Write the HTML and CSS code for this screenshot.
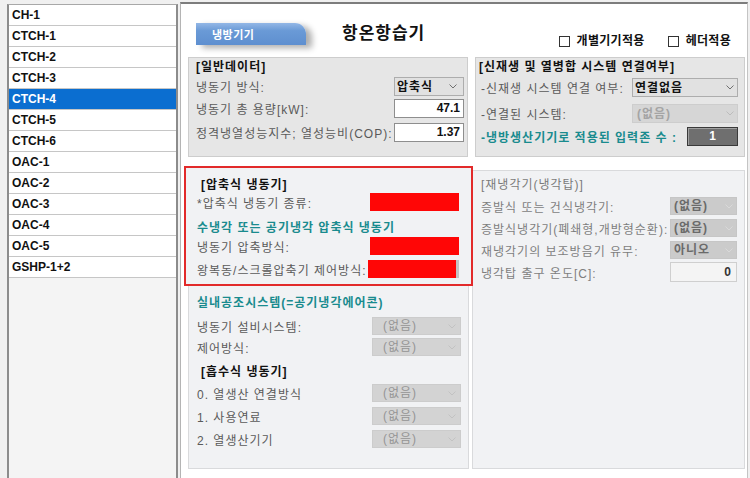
FILE: index.html
```html
<!DOCTYPE html>
<html lang="ko">
<head>
<meta charset="utf-8">
<title>항온항습기</title>
<link rel="stylesheet" href="styles.css">
</head>
<body>
<div class="app">
  <aside class="list">
    <div class="item">CH-1</div>
    <div class="item">CTCH-1</div>
    <div class="item">CTCH-2</div>
    <div class="item">CTCH-3</div>
    <div class="item selected">CTCH-4</div>
    <div class="item">CTCH-5</div>
    <div class="item">CTCH-6</div>
    <div class="item">OAC-1</div>
    <div class="item">OAC-2</div>
    <div class="item">OAC-3</div>
    <div class="item">OAC-4</div>
    <div class="item">OAC-5</div>
    <div class="item">GSHP-1+2</div>
  </aside>

  <main class="pane">
    <header class="head">
      <div class="tab">냉방기기</div>
      <h1 class="title">항온항습기</h1>
      <div class="checks">
        <label class="check"><span class="box"></span>개별기기적용</label>
        <label class="check"><span class="box"></span>헤더적용</label>
      </div>
    </header>

    <div class="top-row">
      <section class="panel p-general">
        <div class="ph">[일반데이터]</div>
        <div class="row r1">
          <span class="lbl">냉동기 방식:</span>
          <div class="combo w70 wide-pad">압축식<svg class="chev" width="8" height="5" viewBox="0 0 8 5"><path d="M0.5 0.5L4 4L7.5 0.5" fill="none" stroke="currentColor"/></svg></div>
        </div>
        <div class="row r2">
          <span class="lbl">냉동기 총 용량[kW]:</span>
          <div class="num w70">47.1</div>
        </div>
        <div class="row r3">
          <span class="lbl">정격냉열성능지수; 열성능비(COP):</span>
          <div class="num w70">1.37</div>
        </div>
      </section>

      <section class="panel p-renew">
        <div class="ph">[신재생 및 열병합 시스템 연결여부]</div>
        <div class="row r1">
          <span class="lbl">-신재생 시스템 연결 여부:</span>
          <div class="combo w106">연결없음<svg class="chev" width="8" height="5" viewBox="0 0 8 5"><path d="M0.5 0.5L4 4L7.5 0.5" fill="none" stroke="currentColor"/></svg></div>
        </div>
        <div class="row r2">
          <span class="lbl">-연결된 시스템:</span>
          <div class="combo w106 dis-light">(없음)<svg class="chev" width="8" height="5" viewBox="0 0 8 5"><path d="M0.5 0.5L4 4L7.5 0.5" fill="none" stroke="currentColor"/></svg></div>
        </div>
        <div class="row r3">
          <span class="lbl teal">-냉방생산기기로 적용된 입력존 수 :</span>
          <div class="zone">1</div>
        </div>
      </section>
    </div>

    <div class="low-row">
      <section class="panel2 p-left">
        <div class="highlight">
          <div class="sh">[압축식 냉동기]</div>
          <div class="row hr1">
            <span class="lbl">*압축식 냉동기 종류:</span>
            <div class="redbox"></div>
          </div>
          <div class="teal-h t1">수냉각 또는 공기냉각 압축식 냉동기</div>
          <div class="row hr2">
            <span class="lbl">냉동기 압축방식:</span>
            <div class="redbox"></div>
          </div>
          <div class="row hr3">
            <span class="lbl">왕복동/스크롤압축기 제어방식:</span>
            <div class="redbox edge"></div>
          </div>
        </div>

        <div class="sub">
          <div class="teal-h t2">실내공조시스템(=공기냉각에어콘)</div>
          <div class="row lr1">
            <span class="lbl">냉동기 설비시스템:</span>
            <div class="combo w89 dis">(없음)<svg class="chev" width="8" height="5" viewBox="0 0 8 5"><path d="M0.5 0.5L4 4L7.5 0.5" fill="none" stroke="currentColor"/></svg></div>
          </div>
          <div class="row lr2">
            <span class="lbl">제어방식:</span>
            <div class="combo w89 dis">(없음)<svg class="chev" width="8" height="5" viewBox="0 0 8 5"><path d="M0.5 0.5L4 4L7.5 0.5" fill="none" stroke="currentColor"/></svg></div>
          </div>
          <div class="sh sh2">[흡수식 냉동기]</div>
          <div class="row lr3">
            <span class="lbl">0. 열생산 연결방식</span>
            <div class="combo w89 dis">(없음)<svg class="chev" width="8" height="5" viewBox="0 0 8 5"><path d="M0.5 0.5L4 4L7.5 0.5" fill="none" stroke="currentColor"/></svg></div>
          </div>
          <div class="row lr4">
            <span class="lbl">1. 사용연료</span>
            <div class="combo w89 dis">(없음)<svg class="chev" width="8" height="5" viewBox="0 0 8 5"><path d="M0.5 0.5L4 4L7.5 0.5" fill="none" stroke="currentColor"/></svg></div>
          </div>
          <div class="row lr4">
            <span class="lbl">2. 열생산기기</span>
            <div class="combo w89 dis">(없음)<svg class="chev" width="8" height="5" viewBox="0 0 8 5"><path d="M0.5 0.5L4 4L7.5 0.5" fill="none" stroke="currentColor"/></svg></div>
          </div>
        </div>
      </section>

      <section class="panel2 p-right">
        <div class="gh">[재냉각기(냉각탑)]</div>
        <div class="row rr">
          <span class="lbl">증발식 또는 건식냉각기:</span>
          <div class="combo w67 dis-dark">(없음)<svg class="chev" width="8" height="5" viewBox="0 0 8 5"><path d="M0.5 0.5L4 4L7.5 0.5" fill="none" stroke="currentColor"/></svg></div>
        </div>
        <div class="row rr">
          <span class="lbl">증발식냉각기(폐쇄형,개방형순환):</span>
          <div class="combo w67 dis-dark">(없음)<svg class="chev" width="8" height="5" viewBox="0 0 8 5"><path d="M0.5 0.5L4 4L7.5 0.5" fill="none" stroke="currentColor"/></svg></div>
        </div>
        <div class="row rr">
          <span class="lbl">재냉각기의 보조방음기 유무:</span>
          <div class="combo w67 dis-dark">아니오<svg class="chev" width="8" height="5" viewBox="0 0 8 5"><path d="M0.5 0.5L4 4L7.5 0.5" fill="none" stroke="currentColor"/></svg></div>
        </div>
        <div class="row rr ri">
          <span class="lbl">냉각탑 출구 온도[C]:</span>
          <div class="num w67 numdis">0</div>
        </div>
      </section>
    </div>
  </main>
</div>
</body>
</html>
```

FILE: styles.css
```css
* { box-sizing: border-box; }
html, body { margin: 0; padding: 0; }
body {
  width: 750px;
  height: 478px;
  overflow: hidden;
  background: #f0f0f0;
  font-family: "Liberation Sans", "Noto Sans CJK KR", sans-serif;
  font-size: 12px;
  color: #000;
}
.app {
  display: flex;
  height: 478px;
  padding-top: 2px;
}

/* left list */
.list {
  margin-left: 7px;
  margin-top: 2px;
  width: 171px;
  border-left: 2px solid #8c8c8c;
  border-right: 2px solid #8c8c8c;
  border-top: 1px solid #a8a8a8;
  background: #f4f4f4;
}
.item {
  height: 21px;
  line-height: 20px;
  border-bottom: 1px solid #c6c6c6;
  background: #fff;
  padding-left: 3px;
  font-weight: bold;
  font-size: 12px;
  color: #111;
}
.item.selected { background: #0b6ed0; color: #fff; }

/* right pane */
.pane {
  margin-left: 2px;
  width: 568px;
  height: 476px;
  background: #fff;
  border-left: 1px solid #b4b4b4;
  border-right: 1px solid #c4c4c4;
  border-top: 2px solid #7d7d7d;
  padding: 0 2px 0 7px;
  letter-spacing: 1px;
}
.head {
  display: flex;
  align-items: flex-start;
  height: 53px;
}
.tab {
  margin-top: 19px;
  margin-left: 8px;
  width: 110px;
  height: 22px;
  padding: 3px 0 0 16px;
  line-height: 19px;
  font-size: 11px;
  font-weight: bold;
  color: #fff;
  letter-spacing: 0.5px;
  background: linear-gradient(#93b7e6, #6a9ad6 35%, #5e8fd0);
  border-top-right-radius: 11px;
  box-shadow: 6px 3px 6px rgba(0, 0, 0, 0.32);
}
.title {
  margin: 20px 0 0 36px;
  font-size: 17px;
  line-height: 20px;
  font-weight: bold;
  color: #111;
}
.checks {
  margin: 30px 14px 0 auto;
  display: flex;
  gap: 23px;
}
.check {
  display: flex;
  align-items: center;
  gap: 7px;
  line-height: 14px;
  font-weight: bold;
  color: #111;
  letter-spacing: 0.3px;
}
.box {
  width: 11px;
  height: 11px;
  border: 1px solid #333;
  background: #fff;
}

/* top panels */
.top-row {
  display: flex;
  gap: 7px;
  height: 100px;
}
.panel {
  border: 1px solid #cdcdcd;
  background: #e6e6e6;
}
.p-general { width: 280px; padding: 1px 3px 0 7px; }
.p-renew { flex: 1; padding: 1px 6px 0 3px; }
.ph {
  font-weight: bold;
  line-height: 16px;
  height: 16px;
  color: #111;
}
.row {
  display: flex;
  align-items: center;
  justify-content: space-between;
}
.lbl { color: #5a5a5a; white-space: nowrap; }
.teal { color: #198b8e; font-weight: bold; }
.p-general .r1 { margin-top: 2px; height: 19px; }
.p-general .r2 { margin-top: 3px; height: 19px; }
.p-general .r3 { margin-top: 5px; height: 19px; }
.p-renew .lbl { margin-left: 2px; }
.p-renew .r1 { margin-top: 3px; height: 19px; }
.p-renew .r2 { margin-top: 7px; height: 19px; }
.p-renew .r3 { margin-top: 4px; height: 19px; }

.combo {
  display: flex;
  align-items: center;
  justify-content: space-between;
  height: 19px;
  border: 1px solid #adadad;
  background: #e1e1e1;
  padding: 0 3px 0 2px;
  font-weight: bold;
  color: #111;
  line-height: 16px;
}
.combo .chev { color: #707070; flex: none; }
.wide-pad { padding-right: 6px; }
.w70 { width: 70px; }
.w106 { width: 106px; }
.w89 { width: 89px; height: 18px; }
.w67 { width: 67px; height: 18px; }
.combo.dis-light {
  background: #d6d6d6;
  border-color: #cdcdcd;
  color: #a4a4a4;
  padding-left: 4px;
}
.combo.dis-light .chev { color: #bcbcbc; }
.combo.dis {
  background: #d3d3d3;
  border-color: #cccccc;
  color: #959595;
  font-weight: normal;
  padding: 0 4px 0 10px;
}
.combo.dis .chev { color: #c2c2c2; }
.combo.dis-dark {
  background: #cbcbcb;
  border-color: #c6c6c6;
  color: #6a6a6a;
  padding: 0 3px 0 3px;
}
.combo.dis-dark .chev { color: #d9d9d9; }

.num {
  height: 19px;
  border: 1px solid #8e8e8e;
  background: #fff;
  text-align: right;
  padding-right: 3px;
  font-weight: bold;
  line-height: 17px;
  color: #111;
  letter-spacing: 0;
}
.numdis {
  height: 20px;
  background: #f4f4f4;
  border-color: #cfcfcf;
  color: #333;
  padding-right: 5px;
  line-height: 18px;
}
.zone {
  width: 51px;
  height: 19px;
  background: #6f6f6f;
  border: 1px solid #3a3a3a;
  box-shadow: inset 1px 1px 0 #a0a0a0;
  color: #fff;
  text-align: center;
  font-weight: bold;
  line-height: 17px;
  letter-spacing: 0;
}

/* lower panels */
.low-row {
  display: flex;
  gap: 3px;
  margin-top: 13px;
  height: 299px;
}
.panel2 {
  border: 1px solid #d9dadc;
  background: #f1f2f4;
}
.p-left { width: 281px; }
.p-right { flex: 1; padding: 6px 7px 0 8px; }

.highlight {
  margin: -5px -5px 0 -5px;
  border: 2px solid #e22a2a;
  background: #f1f2f4;
  padding: 9px 12px 6px 11px;
  position: relative;
}
.sh {
  font-weight: bold;
  line-height: 16px;
  height: 16px;
  padding-left: 4px;
  color: #111;
}
.hr1 { height: 18px; }
.teal-h {
  color: #198b8e;
  font-weight: bold;
  line-height: 16px;
  height: 16px;
}
.t1 { margin-top: 9px; }
.hr2 { height: 18px; margin-top: 1px; }
.hr3 { height: 18px; margin-top: 5px; }
.redbox {
  width: 89px;
  height: 18px;
  background: #ff0606;
}
.redbox.edge {
  width: 88px;
  box-shadow: 3px 0 0 #c4c4c4;
  margin-right: 3px;
}

.sub { padding: 0 7px 0 8px; }
.t2 { margin-top: 9px; }
.lr1 { height: 18px; margin-top: 6px; }
.lr2 { height: 18px; margin-top: 3px; }
.sh2 { margin-top: 8px; }
.lr3 { height: 18px; margin-top: 4px; }
.lr4 { height: 18px; margin-top: 5px; }

.gh {
  color: #7a7a7a;
  line-height: 16px;
  height: 16px;
}
.p-right .lbl { color: #7e7e7e; }
.rr { height: 18px; margin-top: 4px; }
.ri { height: 20px; margin-top: 3px; }
```
